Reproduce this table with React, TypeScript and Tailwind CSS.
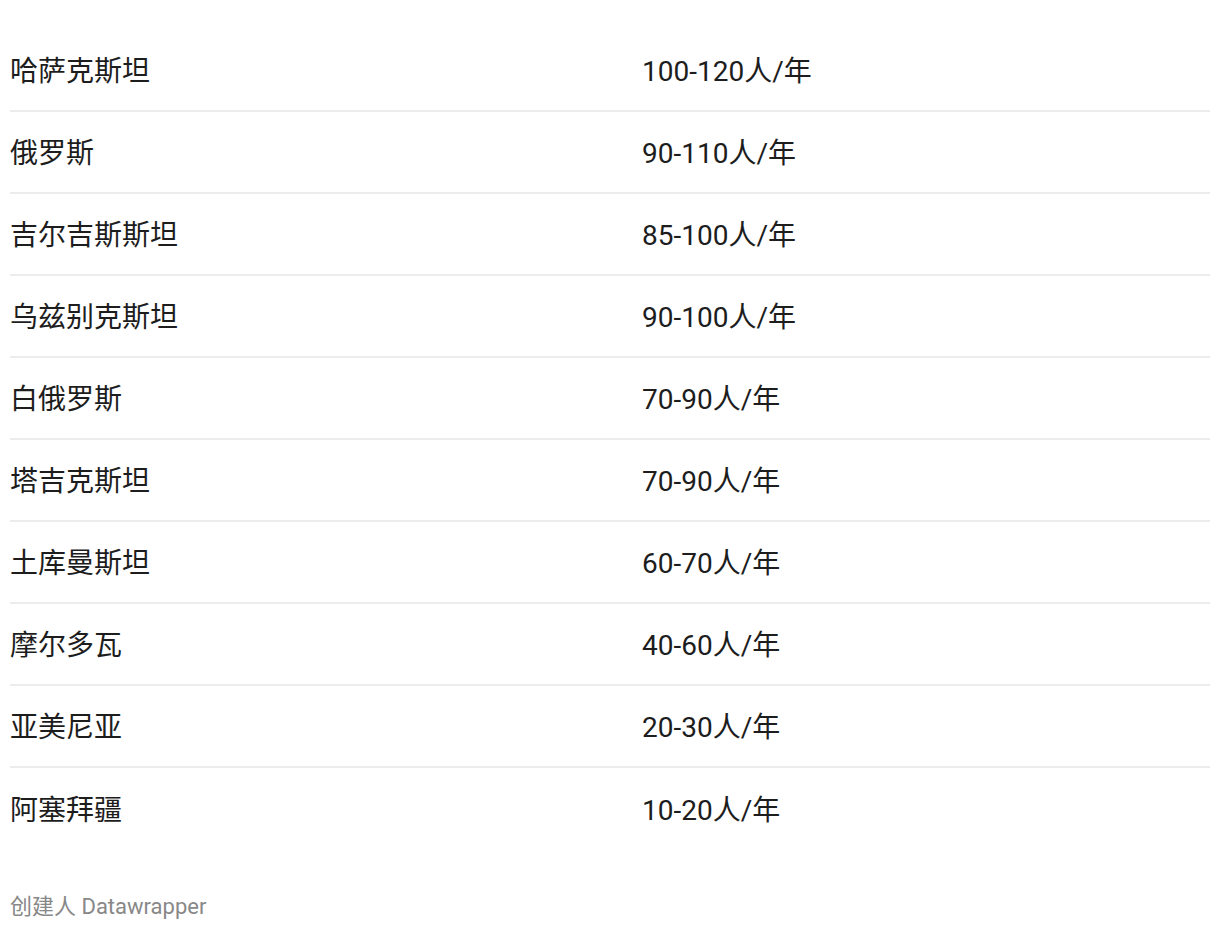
import React from 'react';

const ROWS: [string, string][] = [
  ['哈萨克斯坦', '100-120人/年'],
  ['俄罗斯', '90-110人/年'],
  ['吉尔吉斯斯坦', '85-100人/年'],
  ['乌兹别克斯坦', '90-100人/年'],
  ['白俄罗斯', '70-90人/年'],
  ['塔吉克斯坦', '70-90人/年'],
  ['土库曼斯坦', '60-70人/年'],
  ['摩尔多瓦', '40-60人/年'],
  ['亚美尼亚', '20-30人/年'],
  ['阿塞拜疆', '10-20人/年'],
];

const App: React.FC = () => {
  return (
    <div
      className="w-[1220px] h-[930px] bg-white px-[10px] pt-[30px]"
      style={{ fontFamily: "Roboto, 'Noto Sans CJK SC', sans-serif" }}
    >
      {/* Table */}
      <div className="flex flex-col">
        {ROWS.map(([country, count], i) => (
          <div
            key={country}
            className={`grid grid-cols-[632px_1fr] h-[82px] pt-[4px] items-center text-[28px] text-[#1d1d1d] ${
              i < ROWS.length - 1 ? 'border-b-2 border-[#ececec]' : ''
            }`}
          >
            <span className="leading-none">{country}</span>
            <span className="leading-none">{count}</span>
          </div>
        ))}
      </div>

      {/* Footer */}
      <div className="mt-[46px] text-[22px] leading-none text-[#888888]">
        创建人 Datawrapper
      </div>
    </div>
  );
};

export default App;
